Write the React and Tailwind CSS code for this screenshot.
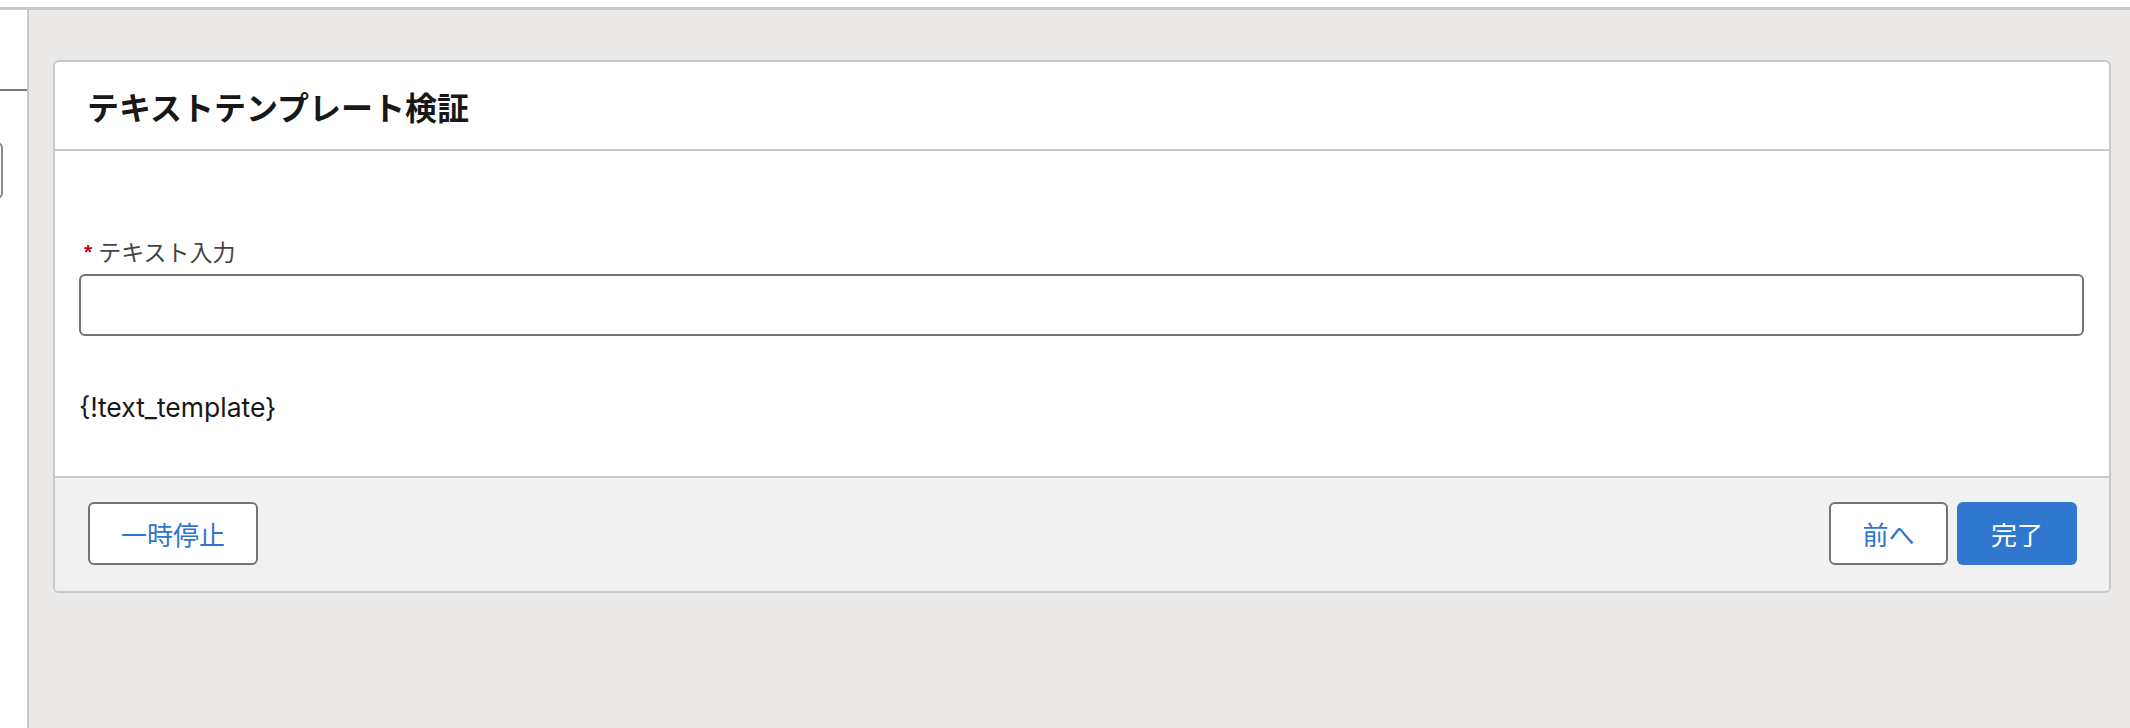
export default function App() {
  const jp = { fontFamily: '"Noto Sans CJK JP", "Noto Sans", sans-serif' };
  return (
    <div className="w-[2130px] h-[728px] bg-white flex flex-col overflow-hidden" style={jp}>
      <div className="h-[7px] bg-white shrink-0" />
      <div className="h-[3px] bg-[#c9c9c9] shrink-0" />
      <div className="flex flex-1 min-h-0">
        {/* left panel */}
        <div className="w-[27px] shrink-0 bg-white overflow-hidden flex flex-col">
          <div className="h-[79px] shrink-0" />
          <div className="h-[2px] bg-[#777777] shrink-0" />
          <div className="h-[51px] shrink-0" />
          <div className="w-[60px] h-[57px] -ml-[57px] border-2 border-[#888888] rounded-[6px] shrink-0" />
        </div>
        <div className="w-[2px] bg-[#c9c9c9] shrink-0" />
        {/* main */}
        <div className="flex-1 bg-[#eae9e7] pl-[24px] pr-[19px] pt-[50px]">
          <div className="border-2 border-[#c9c9c9] rounded-[6px] bg-white overflow-hidden">
            <div className="h-[89px] flex items-center pl-[32px] border-b-2 border-[#c9c9c9]">
              <h1 className="text-[32px] font-bold text-[#181818] leading-none">テキストテンプレート検証</h1>
            </div>
            <div className="pt-[85px] pb-[50px] pl-[24px] pr-[25px]">
              <div className="h-[30px] flex items-center text-[23px] leading-[30px] text-[#444444]">
                <span className="text-[#ba0517] text-[21px] ml-[5px] mr-[6px] leading-none font-bold" style={{ fontFamily: '"Liberation Sans", sans-serif' }}>*</span>
                <span>テキスト入力</span>
              </div>
              <div className="mt-[8px] h-[62px] border-2 border-[#747474] rounded-[6px] bg-white" />
              <div className="mt-[54px] h-[36px] flex items-center text-[26.5px] text-[#181818]" style={{ fontFamily: 'Inter, "Noto Sans CJK JP", sans-serif' }}>
                {"{!text_template}"}
              </div>
            </div>
            <div className="border-t-2 border-[#c9c9c9] bg-[#f1f1f1] pt-[24px] pb-[26px] pl-[33px] pr-[32px] flex items-center justify-between">
              <button className="w-[170px] h-[63px] border-2 border-[#747474] rounded-[6px] bg-white text-[26px] text-[#2f74cf] flex items-center justify-center">
                一時停止
              </button>
              <div className="flex gap-[9px]">
                <button className="w-[119px] h-[63px] border-2 border-[#747474] rounded-[6px] bg-white text-[26px] text-[#2f74cf] flex items-center justify-center">
                  前へ
                </button>
                <button className="w-[120px] h-[63px] rounded-[6px] bg-[#3077cf] text-[26px] text-white flex items-center justify-center">
                  完了
                </button>
              </div>
            </div>
          </div>
        </div>
      </div>
    </div>
  );
}
